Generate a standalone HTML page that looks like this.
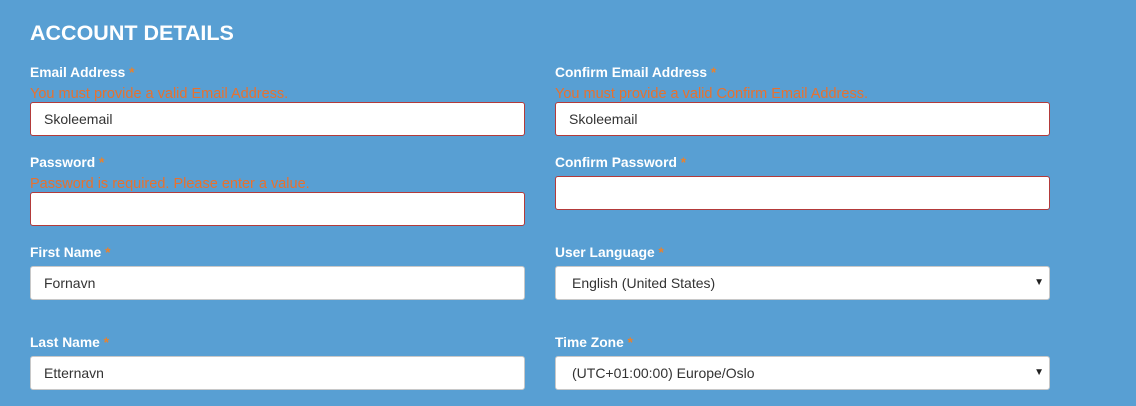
<html><head><style>
body{margin:0;width:1136px;height:406px;background:#589fd3;font-family:"Liberation Sans",sans-serif;position:relative;overflow:hidden}
h1{position:absolute;left:30px;top:21px;margin:0;color:#fff;font-size:21.5px;font-weight:bold}
.l{position:absolute;color:#fff;font-size:13.8px;font-weight:bold}
.l b{color:#e8822e}
.e{position:absolute;color:#e8712e;font-size:14.5px}
.i{position:absolute;width:493px;height:32px;background:#fff;border:1px solid #c8c8c8;border-radius:3px;box-sizing:content-box;font-size:14px;color:#333;line-height:32px;text-indent:13px}
.r{border-color:#b33a3a}
.s{text-indent:16px}
.s:after{content:"▼";position:absolute;right:5px;top:0;font-size:10px;color:#222}
</style></head><body>
<h1>ACCOUNT DETAILS</h1>
<div class="l" style="left:30px;top:65px">Email Address <b>*</b></div>
<div class="e" style="left:30px;top:86px">You must provide a valid Email Address.</div>
<div class="i r" style="left:30px;top:102px">Skoleemail</div>
<div class="l" style="left:555px;top:65px">Confirm Email Address <b>*</b></div>
<div class="e" style="left:555px;top:86px">You must provide a valid Confirm Email Address.</div>
<div class="i r" style="left:555px;top:102px">Skoleemail</div>
<div class="l" style="left:30px;top:155px">Password <b>*</b></div>
<div class="e" style="left:30px;top:176px">Password is required. Please enter a value.</div>
<div class="i r" style="left:30px;top:192px"></div>
<div class="l" style="left:555px;top:155px">Confirm Password <b>*</b></div>
<div class="i r" style="left:555px;top:176px"></div>
<div class="l" style="left:30px;top:245px">First Name <b>*</b></div>
<div class="i" style="left:30px;top:266px">Fornavn</div>
<div class="l" style="left:555px;top:245px">User Language <b>*</b></div>
<div class="i s" style="left:555px;top:266px">English (United States)</div>
<div class="l" style="left:30px;top:335px">Last Name <b>*</b></div>
<div class="i" style="left:30px;top:356px">Etternavn</div>
<div class="l" style="left:555px;top:335px">Time Zone <b>*</b></div>
<div class="i s" style="left:555px;top:356px">(UTC+01:00:00) Europe/Oslo</div>
</body></html>
